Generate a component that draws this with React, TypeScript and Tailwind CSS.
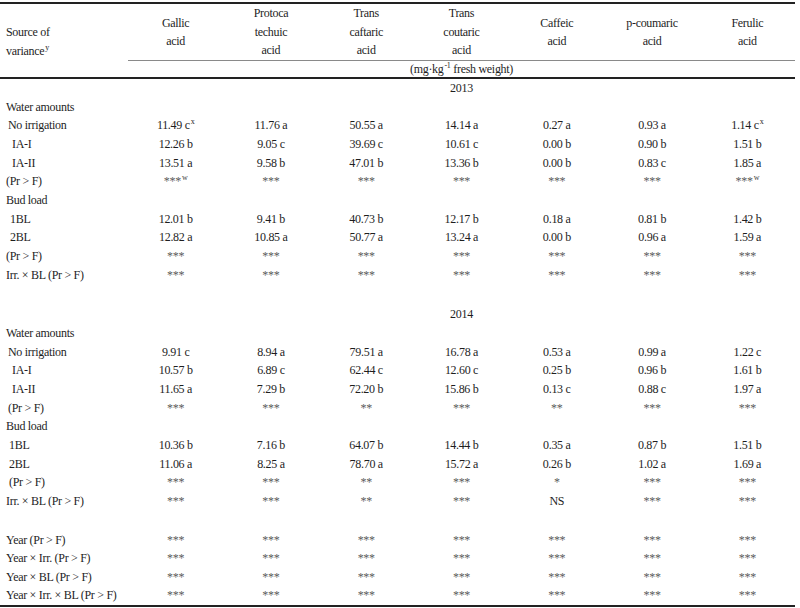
import type { ReactNode } from "react"

const grid = "grid grid-cols-[128px_repeat(7,minmax(0,1fr))]"
const supCls = "text-[8px] -top-[5px] ml-[1px]"

const Stars = ({ n = 3, sup }: { n?: number; sup?: string }) => (
  <span className="text-[#5a5a5a]">
    {"*".repeat(n)}
    {sup && <sup className={`${supCls} text-[#444]`}>{sup}</sup>}
  </span>
)

const NS = () => <span>NS</span>

type Row = { label: ReactNode; indent?: string; cells?: ReactNode[] }

const s3 = () => Array.from({ length: 7 }, (_, i) => <Stars key={i} />)

const rows2013: Row[] = [
  { label: "Water amounts", indent: "pl-[6px]" },
  {
    label: "No irrigation",
    indent: "pl-[8px]",
    cells: [
      <span key="g">11.49 c<sup className={supCls}>x</sup></span>,
      "11.76 a",
      "50.55 a",
      "14.14 a",
      "0.27 a",
      "0.93 a",
      <span key="f">1.14 c<sup className={supCls}>x</sup></span>,
    ],
  },
  { label: "IA-I", indent: "pl-[12px]", cells: ["12.26 b", "9.05 c", "39.69 c", "10.61 c", "0.00 b", "0.90 b", "1.51 b"] },
  { label: "IA-II", indent: "pl-[12px]", cells: ["13.51 a", "9.58 b", "47.01 b", "13.36 b", "0.00 b", "0.83 c", "1.85 a"] },
  {
    label: "(Pr > F)",
    indent: "pl-[6px]",
    cells: [
      <Stars key="a" sup="w" />,
      <Stars key="b" />,
      <Stars key="c" />,
      <Stars key="d" />,
      <Stars key="e" />,
      <Stars key="f" />,
      <Stars key="g" sup="w" />,
    ],
  },
  { label: "Bud load", indent: "pl-[6px]" },
  { label: "1BL", indent: "pl-[10px]", cells: ["12.01 b", "9.41 b", "40.73 b", "12.17 b", "0.18 a", "0.81 b", "1.42 b"] },
  { label: "2BL", indent: "pl-[10px]", cells: ["12.82 a", "10.85 a", "50.77 a", "13.24 a", "0.00 b", "0.96 a", "1.59 a"] },
  { label: "(Pr > F)", indent: "pl-[6px]", cells: s3() },
  { label: "Irr. × BL (Pr > F)", indent: "pl-[6px]", cells: s3() },
]

const rows2014: Row[] = [
  { label: "Water amounts", indent: "pl-[6px]" },
  { label: "No irrigation", indent: "pl-[8px]", cells: ["9.91 c", "8.94 a", "79.51 a", "16.78 a", "0.53 a", "0.99 a", "1.22 c"] },
  { label: "IA-I", indent: "pl-[12px]", cells: ["10.57 b", "6.89 c", "62.44 c", "12.60 c", "0.25 b", "0.96 b", "1.61 b"] },
  { label: "IA-II", indent: "pl-[12px]", cells: ["11.65 a", "7.29 b", "72.20 b", "15.86 b", "0.13 c", "0.88 c", "1.97 a"] },
  {
    label: "(Pr > F)",
    indent: "pl-[8px]",
    cells: [
      <Stars key="a" />,
      <Stars key="b" />,
      <Stars key="c" n={2} />,
      <Stars key="d" />,
      <Stars key="e" n={2} />,
      <Stars key="f" />,
      <Stars key="g" />,
    ],
  },
  { label: "Bud load", indent: "pl-[6px]" },
  { label: "1BL", indent: "pl-[9px]", cells: ["10.36 b", "7.16 b", "64.07 b", "14.44 b", "0.35 a", "0.87 b", "1.51 b"] },
  { label: "2BL", indent: "pl-[9px]", cells: ["11.06 a", "8.25 a", "78.70 a", "15.72 a", "0.26 b", "1.02 a", "1.69 a"] },
  {
    label: "(Pr > F)",
    indent: "pl-[9px]",
    cells: [
      <Stars key="a" />,
      <Stars key="b" />,
      <Stars key="c" n={2} />,
      <Stars key="d" />,
      <Stars key="e" n={1} />,
      <Stars key="f" />,
      <Stars key="g" />,
    ],
  },
  {
    label: "Irr. × BL (Pr > F)",
    indent: "pl-[6px]",
    cells: [
      <Stars key="a" />,
      <Stars key="b" />,
      <Stars key="c" n={2} />,
      <Stars key="d" />,
      <NS key="e" />,
      <Stars key="f" />,
      <Stars key="g" />,
    ],
  },
]

const yearRows: Row[] = [
  { label: "Year (Pr > F)", indent: "pl-[6px]", cells: s3() },
  { label: "Year × Irr. (Pr > F)", indent: "pl-[6px]", cells: s3() },
  { label: "Year × BL (Pr > F)", indent: "pl-[6px]", cells: s3() },
  { label: "Year × Irr. × BL (Pr > F)", indent: "pl-[6px]", cells: s3() },
]

const headers: ReactNode[][] = [
  ["Gallic", "acid"],
  ["Protoca", "techuic", "acid"],
  ["Trans", "caftaric", "acid"],
  ["Trans", "coutaric", "acid"],
  ["Caffeic", "acid"],
  ["p-coumaric", "acid"],
  ["Ferulic", "acid"],
]

function TableRow({ row }: { row: Row }) {
  return (
    <div className={`${grid} h-[18.67px] items-center`}>
      <div className={`${row.indent} whitespace-nowrap`}>{row.label}</div>
      {row.cells?.map((c, i) => (
        <div key={i} className="text-center whitespace-nowrap">
          {c}
        </div>
      ))}
    </div>
  )
}

function YearRow({ year }: { year: string }) {
  return (
    <div className={`${grid} h-[18.67px] items-center`}>
      <div />
      <div className="col-span-7 text-center">{year}</div>
    </div>
  )
}

export default function App() {
  return (
    <main className="w-[800px] h-[608px] bg-white overflow-hidden">
      <div
        className="w-[795px] text-[12px] leading-[18.5px] text-[#1e1e1e] tracking-[-0.3px]"
        style={{ fontFamily: '"Liberation Serif", "Times New Roman", serif' }}
      >
        {/* Header */}
        <div className="mt-[2px] border-t-2 border-[#222]" />
        <div className={`${grid} h-[56px]`}>
          <div className="flex flex-col justify-end pl-[6px]">
            <span>Source of</span>
            <span>
              variance<sup className={supCls}>y</sup>
            </span>
          </div>
          {headers.map((h, i) => (
            <div key={i} className="flex flex-col items-center justify-center text-center">
              {h.map((line, j) => (
                <span key={j}>{line}</span>
              ))}
            </div>
          ))}
        </div>
        <div className="ml-[128px] border-t border-[#8a8a8a]" />
        <div className={`${grid} h-[16px] items-center`}>
          <div />
          <div className="col-span-7 text-center leading-[16px]">
            (mg·kg<sup className={supCls}>-1</sup> fresh weight)
          </div>
        </div>
        <div className="border-t-2 border-[#222]" />

        {/* 2013 */}
        <YearRow year="2013" />
        {rows2013.map((r, i) => (
          <TableRow key={i} row={r} />
        ))}

        <div className="h-[21px]" />

        {/* 2014 */}
        <YearRow year="2014" />
        {rows2014.map((r, i) => (
          <TableRow key={i} row={r} />
        ))}

        <div className="h-[20px]" />

        {/* Year interactions */}
        {yearRows.map((r, i) => (
          <TableRow key={i} row={r} />
        ))}
        <div className="border-t-2 border-[#222]" />
      </div>
    </main>
  )
}
